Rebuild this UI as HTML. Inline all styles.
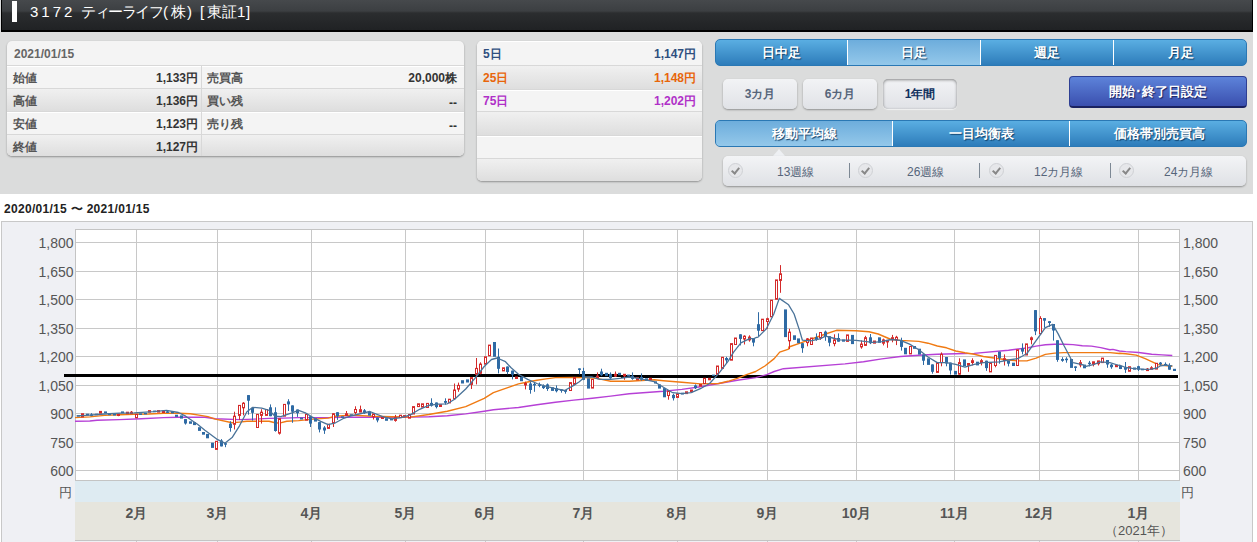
<!DOCTYPE html>
<html><head><meta charset="utf-8">
<style>
*{box-sizing:border-box;margin:0;padding:0}
html,body{width:1257px;height:542px;overflow:hidden;background:#fff;font-family:"Liberation Sans",sans-serif;}
.a{position:absolute}
#topbg{left:0;top:0;width:1253px;height:194px;background:#dbdcdc}
#hdr{left:1px;top:0;width:1252px;height:32px;background:linear-gradient(#46494c 0,#3c3f42 11px,#2b2d2f 13px,#202224 30px);border-bottom:2px solid #000;border-left:1px solid #000;border-right:1px solid #000}
#bar{left:12px;top:1px;width:5px;height:21px;background:#fff}
.ttl{top:3px;color:#fff;font-size:15px;line-height:17px;white-space:nowrap}
.panel{background:#f4f4f4;border-radius:5px;box-shadow:0 1px 2px rgba(0,0,0,.35);overflow:hidden}
.row{position:absolute;left:0;right:0;border-top:1px solid #d8d8d8}
.row.g{background:linear-gradient(#f0f0f0,#dedede)}
.row.l{background:#f4f4f4;box-shadow:inset 0 1px 0 #fff}
.lab{position:absolute;font-size:12px;color:#555;font-weight:bold;white-space:nowrap}
.val{position:absolute;font-size:12px;color:#333;font-weight:bold;white-space:nowrap;text-align:right}
.tabs{border-radius:5px;overflow:hidden;background:linear-gradient(#5aaee2,#2d7cba);border:1px solid #2a78b4}
.tab{position:absolute;top:0;bottom:0;color:#fff;font-weight:bold;font-size:13px;text-align:center;text-shadow:1px 1px 1px #10406a;border-left:1px solid #fff}
.tab.sel{background:linear-gradient(#6daddc,#94c8ea)}
.btn{border-radius:5px;background:linear-gradient(#f2f3f5,#e0e2e6);box-shadow:0 1px 2px rgba(0,0,0,.35);font-size:12px;font-weight:bold;color:#56657a;text-align:center;line-height:30px}
.btn.sel{box-shadow:inset 0 1px 3px rgba(0,0,0,.45),0 1px 1px rgba(255,255,255,.6);color:#10305e}
#setbtn{left:1069px;top:76px;width:178px;height:32px;border-radius:4px;background:linear-gradient(#5d83da,#3a4fae);border:1px solid #2e3f93;border-bottom:2px solid #1a2260;color:#fff;font-size:13px;font-weight:bold;text-align:center;line-height:29px;text-shadow:1px 1px 1px #1a2260}
#sub{left:723px;top:156px;width:523px;height:30px;border-radius:5px;background:linear-gradient(#f3f4f6,#dfe1e5);box-shadow:0 1px 2px rgba(0,0,0,.35)}
.chk{position:absolute;top:7px;width:15px;height:15px;border-radius:50%;background:#e6e7ea;border:1px solid #cfd1d5}
.chk:after{content:"";position:absolute;left:4px;top:2px;width:3px;height:6px;border-right:2px solid #888;border-bottom:2px solid #888;transform:rotate(40deg)}
.sdiv{position:absolute;top:7px;width:1px;height:15px;background:#7d8894}
.stxt{position:absolute;top:8px;font-size:12px;color:#56657a;white-space:nowrap}
#daterange{left:4px;top:201px;font-size:12px;letter-spacing:0.3px;font-weight:bold;color:#222;white-space:nowrap}
#chartbox{left:1px;top:221px;width:1252px;height:330px;background:#eff0f4;border:1px solid #c8c8c8}
</style></head><body>
<div id="topbg" class="a"></div>
<div id="hdr" class="a"></div>
<div id="bar" class="a"></div>
<div class="a ttl" style="left:30px;letter-spacing:3px">3172</div>
<div class="a ttl" style="left:81px;letter-spacing:-1.4px">ティーライフ</div>
<div class="a ttl" style="left:163px">(</div>
<div class="a ttl" style="left:171px">株</div>
<div class="a ttl" style="left:187px">)</div>
<div class="a ttl" style="left:200px">[</div>
<div class="a ttl" style="left:207px;letter-spacing:0px">東証</div>
<div class="a ttl" style="left:237px">1</div>
<div class="a ttl" style="left:246px">]</div>

<div class="a panel" style="left:7px;top:41px;width:457px;height:115px">
  <div class="lab" style="left:7px;top:6px;color:#666">2021/01/15</div>
  <div class="row l" style="top:24px;height:23px"></div>
  <div class="row g" style="top:47px;height:23px"></div>
  <div class="row l" style="top:70px;height:23px"></div>
  <div class="row g" style="top:93px;height:22px"></div>
  <div class="a" style="left:194px;top:24px;width:1px;height:91px;background:#fff;border-left:1px solid #d8d8d8"></div>
  <div class="lab" style="left:6px;top:29px">始値</div>
  <div class="lab" style="left:6px;top:52px">高値</div>
  <div class="lab" style="left:6px;top:75px">安値</div>
  <div class="lab" style="left:6px;top:98px">終値</div>
  <div class="val" style="right:266px;top:29px">1,133円</div>
  <div class="val" style="right:266px;top:52px">1,136円</div>
  <div class="val" style="right:266px;top:75px">1,123円</div>
  <div class="val" style="right:266px;top:98px">1,127円</div>
  <div class="lab" style="left:200px;top:29px">売買高</div>
  <div class="lab" style="left:200px;top:52px">買い残</div>
  <div class="lab" style="left:200px;top:75px">売り残</div>
  <div class="val" style="right:7px;top:29px">20,000株</div>
  <div class="val" style="right:7px;top:55px">--</div>
  <div class="val" style="right:7px;top:78px">--</div>
</div>

<div class="a panel" style="left:477px;top:41px;width:225px;height:140px">
  <div class="row l" style="top:0;height:24px;border-top:0"></div>
  <div class="row g" style="top:24px;height:24px"></div>
  <div class="row l" style="top:48px;height:22px"></div>
  <div class="row g" style="top:70px;height:24px"></div>
  <div class="row l" style="top:94px;height:23px"></div>
  <div class="row g" style="top:117px;height:23px"></div>
  <div class="lab" style="left:6px;top:5px;color:#2f4f7f">5日</div>
  <div class="lab" style="left:6px;top:29px;color:#e8650a">25日</div>
  <div class="lab" style="left:6px;top:52px;color:#b030c8">75日</div>
  <div class="val" style="right:6px;top:5px;color:#2f4f7f">1,147円</div>
  <div class="val" style="right:6px;top:29px;color:#e8650a">1,148円</div>
  <div class="val" style="right:6px;top:52px;color:#b030c8">1,202円</div>
</div>

<div class="a tabs" style="left:715px;top:39px;width:532px;height:27px">
  <div class="tab" style="left:0;width:131px;border-left:0;line-height:25px">日中足</div>
  <div class="tab sel" style="left:131px;width:133px;line-height:25px">日足</div>
  <div class="tab" style="left:264px;width:133px;line-height:25px">週足</div>
  <div class="tab" style="left:397px;width:135px;line-height:25px">月足</div>
</div>
<div class="a btn" style="left:723px;top:79px;width:74px;height:30px">3カ月</div>
<div class="a btn" style="left:803px;top:79px;width:74px;height:30px">6カ月</div>
<div class="a btn sel" style="left:883px;top:79px;width:74px;height:30px">1年間</div>
<div id="setbtn" class="a">開始･終了日設定</div>

<div class="a tabs" style="left:715px;top:120px;width:532px;height:27px">
  <div class="tab sel" style="left:0;width:176px;border-left:0;line-height:25px">移動平均線</div>
  <div class="tab" style="left:176px;width:177px;line-height:25px">一目均衡表</div>
  <div class="tab" style="left:353px;width:179px;line-height:25px">価格帯別売買高</div>
</div>
<div class="a" style="left:773px;top:149px;width:0;height:0;border-left:6px solid transparent;border-right:6px solid transparent;border-bottom:7px solid #eef0f3"></div>
<div id="sub" class="a">
  <div class="chk" style="left:5px"></div><div class="stxt" style="left:54px">13週線</div>
  <div class="sdiv" style="left:126px"></div>
  <div class="chk" style="left:135px"></div><div class="stxt" style="left:184px">26週線</div>
  <div class="sdiv" style="left:256px"></div>
  <div class="chk" style="left:266px"></div><div class="stxt" style="left:311px">12カ月線</div>
  <div class="sdiv" style="left:387px"></div>
  <div class="chk" style="left:396px"></div><div class="stxt" style="left:441px">24カ月線</div>
</div>

<div id="daterange" class="a">2020/01/15 〜 2021/01/15</div>
<div id="chartbox" class="a"></div>
<svg class="a" style="left:0;top:0" width="1257" height="542">
<rect x="75.5" y="229.5" width="1104" height="251" fill="#fff" stroke="#c4c4c4"/>
<rect x="75" y="481" width="1105" height="21" fill="#deebf2"/>
<rect x="75" y="502" width="1105" height="38" fill="#e6e5dd"/>
<line x1="75" y1="540.5" x2="1180" y2="540.5" stroke="#c4c4c4"/>
<line x1="136.5" y1="230" x2="136.5" y2="480" stroke="#c8c8c8"/>
<line x1="136.5" y1="541" x2="136.5" y2="542" stroke="#c8c8c8"/>
<line x1="217.5" y1="230" x2="217.5" y2="480" stroke="#c8c8c8"/>
<line x1="217.5" y1="541" x2="217.5" y2="542" stroke="#c8c8c8"/>
<line x1="311.5" y1="230" x2="311.5" y2="480" stroke="#c8c8c8"/>
<line x1="311.5" y1="541" x2="311.5" y2="542" stroke="#c8c8c8"/>
<line x1="405.5" y1="230" x2="405.5" y2="480" stroke="#c8c8c8"/>
<line x1="405.5" y1="541" x2="405.5" y2="542" stroke="#c8c8c8"/>
<line x1="485.5" y1="230" x2="485.5" y2="480" stroke="#c8c8c8"/>
<line x1="485.5" y1="541" x2="485.5" y2="542" stroke="#c8c8c8"/>
<line x1="583.5" y1="230" x2="583.5" y2="480" stroke="#c8c8c8"/>
<line x1="583.5" y1="541" x2="583.5" y2="542" stroke="#c8c8c8"/>
<line x1="677.5" y1="230" x2="677.5" y2="480" stroke="#c8c8c8"/>
<line x1="677.5" y1="541" x2="677.5" y2="542" stroke="#c8c8c8"/>
<line x1="767.5" y1="230" x2="767.5" y2="480" stroke="#c8c8c8"/>
<line x1="767.5" y1="541" x2="767.5" y2="542" stroke="#c8c8c8"/>
<line x1="856.5" y1="230" x2="856.5" y2="480" stroke="#c8c8c8"/>
<line x1="856.5" y1="541" x2="856.5" y2="542" stroke="#c8c8c8"/>
<line x1="954.5" y1="230" x2="954.5" y2="480" stroke="#c8c8c8"/>
<line x1="954.5" y1="541" x2="954.5" y2="542" stroke="#c8c8c8"/>
<line x1="1039.5" y1="230" x2="1039.5" y2="480" stroke="#c8c8c8"/>
<line x1="1039.5" y1="541" x2="1039.5" y2="542" stroke="#c8c8c8"/>
<line x1="1138.5" y1="230" x2="1138.5" y2="480" stroke="#c8c8c8"/>
<line x1="1138.5" y1="541" x2="1138.5" y2="542" stroke="#c8c8c8"/>
<line x1="76" y1="242.5" x2="1179" y2="242.5" stroke="#c8c8c8"/>
<text x="73.5" y="248.0" text-anchor="end" font-size="14" fill="#555" font-family="Liberation Sans">1,800</text>
<text x="1183" y="248.0" font-size="14" fill="#555" font-family="Liberation Sans">1,800</text>
<line x1="76" y1="271.5" x2="1179" y2="271.5" stroke="#c8c8c8"/>
<text x="73.5" y="277.0" text-anchor="end" font-size="14" fill="#555" font-family="Liberation Sans">1,650</text>
<text x="1183" y="277.0" font-size="14" fill="#555" font-family="Liberation Sans">1,650</text>
<line x1="76" y1="299.5" x2="1179" y2="299.5" stroke="#c8c8c8"/>
<text x="73.5" y="305.0" text-anchor="end" font-size="14" fill="#555" font-family="Liberation Sans">1,500</text>
<text x="1183" y="305.0" font-size="14" fill="#555" font-family="Liberation Sans">1,500</text>
<line x1="76" y1="328.5" x2="1179" y2="328.5" stroke="#c8c8c8"/>
<text x="73.5" y="334.0" text-anchor="end" font-size="14" fill="#555" font-family="Liberation Sans">1,350</text>
<text x="1183" y="334.0" font-size="14" fill="#555" font-family="Liberation Sans">1,350</text>
<line x1="76" y1="356.5" x2="1179" y2="356.5" stroke="#c8c8c8"/>
<text x="73.5" y="362.0" text-anchor="end" font-size="14" fill="#555" font-family="Liberation Sans">1,200</text>
<text x="1183" y="362.0" font-size="14" fill="#555" font-family="Liberation Sans">1,200</text>
<line x1="76" y1="385.5" x2="1179" y2="385.5" stroke="#c8c8c8"/>
<text x="73.5" y="391.0" text-anchor="end" font-size="14" fill="#555" font-family="Liberation Sans">1,050</text>
<text x="1183" y="391.0" font-size="14" fill="#555" font-family="Liberation Sans">1,050</text>
<line x1="76" y1="413.5" x2="1179" y2="413.5" stroke="#c8c8c8"/>
<text x="73.5" y="419.0" text-anchor="end" font-size="14" fill="#555" font-family="Liberation Sans">900</text>
<text x="1183" y="419.0" font-size="14" fill="#555" font-family="Liberation Sans">900</text>
<line x1="76" y1="442.5" x2="1179" y2="442.5" stroke="#c8c8c8"/>
<text x="73.5" y="448.0" text-anchor="end" font-size="14" fill="#555" font-family="Liberation Sans">750</text>
<text x="1183" y="448.0" font-size="14" fill="#555" font-family="Liberation Sans">750</text>
<line x1="76" y1="470.5" x2="1179" y2="470.5" stroke="#c8c8c8"/>
<text x="73.5" y="476.0" text-anchor="end" font-size="14" fill="#555" font-family="Liberation Sans">600</text>
<text x="1183" y="476.0" font-size="14" fill="#555" font-family="Liberation Sans">600</text>
<text x="72" y="497" text-anchor="end" font-size="13" fill="#555" font-family="Liberation Sans">円</text>
<text x="1181" y="497" font-size="13" fill="#555" font-family="Liberation Sans">円</text>
<text x="136.5" y="518" text-anchor="middle" font-size="14" font-weight="bold" fill="#555" font-family="Liberation Sans">2月</text>
<text x="217.5" y="518" text-anchor="middle" font-size="14" font-weight="bold" fill="#555" font-family="Liberation Sans">3月</text>
<text x="311.5" y="518" text-anchor="middle" font-size="14" font-weight="bold" fill="#555" font-family="Liberation Sans">4月</text>
<text x="405.5" y="518" text-anchor="middle" font-size="14" font-weight="bold" fill="#555" font-family="Liberation Sans">5月</text>
<text x="485.5" y="518" text-anchor="middle" font-size="14" font-weight="bold" fill="#555" font-family="Liberation Sans">6月</text>
<text x="583.5" y="518" text-anchor="middle" font-size="14" font-weight="bold" fill="#555" font-family="Liberation Sans">7月</text>
<text x="677.5" y="518" text-anchor="middle" font-size="14" font-weight="bold" fill="#555" font-family="Liberation Sans">8月</text>
<text x="767.5" y="518" text-anchor="middle" font-size="14" font-weight="bold" fill="#555" font-family="Liberation Sans">9月</text>
<text x="856.5" y="518" text-anchor="middle" font-size="14" font-weight="bold" fill="#555" font-family="Liberation Sans">10月</text>
<text x="954.5" y="518" text-anchor="middle" font-size="14" font-weight="bold" fill="#555" font-family="Liberation Sans">11月</text>
<text x="1039.5" y="518" text-anchor="middle" font-size="14" font-weight="bold" fill="#555" font-family="Liberation Sans">12月</text>
<text x="1138.5" y="518" text-anchor="middle" font-size="14" font-weight="bold" fill="#555" font-family="Liberation Sans">1月</text>
<text x="1139" y="535" text-anchor="middle" font-size="13" fill="#555" font-family="Liberation Sans">（2021年）</text>
<rect x="64" y="374" width="557" height="3" fill="#000"/>
<rect x="621" y="375" width="557" height="3" fill="#000"/>
<polyline points="75.0,421.3 89.8,421.0 97.1,420.2 119.3,419.6 141.4,418.7 163.6,417.6 178.4,417.2 204.9,417.2 215.3,418.7 239.5,419.6 254.3,419.1 269.1,418.4 283.8,418.1 298.6,417.6 328.1,417.6 342.9,417.2 391.9,417.3 428.8,416.7 447.3,415.8 465.7,413.9 484.2,411.2 493.4,409.7 518.5,407.5 536.9,404.7 555.4,402.3 573.8,400.1 592.3,398.3 610.7,396.1 629.2,393.7 663.5,391.3 681.9,389.4 700.4,386.8 718.8,383.5 737.3,380.2 755.7,377.6 766.8,374.6 774.2,371.5 783.4,368.7 845.0,363.9 863.5,361.7 881.9,358.9 900.4,356.5 918.8,355.2 937.3,354.3 955.7,353.7 974.2,353.4 1008.5,350.2 1026.9,348.0 1036.1,346.1 1045.4,344.8 1054.6,344.3 1063.8,344.3 1073.0,344.6 1082.3,345.8 1091.5,346.1 1100.7,347.6 1109.9,349.8 1112.9,349.4 1119.4,351.0 1125.8,351.6 1138.7,352.5 1151.7,354.2 1162.0,354.9 1172.3,355.5" fill="none" stroke="#b640d6" stroke-width="1.4" stroke-linejoin="round"/>
<polyline points="75.0,417.6 89.8,416.9 104.5,415.4 119.3,414.7 134.1,414.3 148.8,414.0 163.6,413.2 178.4,413.2 190.2,413.7 200.5,415.4 207.9,416.6 215.3,419.1 232.1,422.8 239.5,422.1 246.9,421.3 269.1,421.3 275.0,422.8 279.4,423.1 286.8,421.3 298.6,420.6 313.4,419.1 328.1,418.1 335.5,416.2 350.3,415.1 373.5,416.3 391.9,416.7 410.4,417.1 428.8,414.5 447.3,411.2 465.7,406.6 484.2,398.3 493.4,392.7 509.2,387.2 518.5,383.9 527.7,382.0 536.9,380.2 546.1,378.9 555.4,377.6 573.8,377.4 584.9,377.6 595.9,378.3 601.5,379.4 610.7,381.3 629.2,381.3 654.2,379.8 663.5,380.7 681.9,382.2 700.4,383.9 718.8,383.5 728.0,381.3 737.3,378.3 746.5,374.6 755.7,371.5 764.9,366.0 774.2,358.6 779.7,352.1 788.6,349.1 788.9,347.0 801.5,342.6 814.4,338.0 825.5,334.0 836.5,330.3 856.1,330.7 869.0,331.8 878.2,334.0 891.1,339.5 900.4,340.4 918.8,341.4 928.0,343.2 937.3,346.0 946.5,347.8 955.7,351.0 964.9,352.8 974.2,354.3 983.4,356.5 999.2,358.7 1008.5,360.0 1017.7,360.9 1026.9,360.9 1036.1,358.1 1045.4,354.4 1054.6,353.1 1063.8,352.6 1109.9,352.6 1119.2,353.5 1119.4,353.3 1125.8,353.8 1136.2,355.1 1145.2,358.7 1151.7,361.6 1158.1,364.6 1164.6,365.5 1172.3,366.2" fill="none" stroke="#f07a12" stroke-width="1.4" stroke-linejoin="round"/>
<rect x="77.0" y="415.1" width="3" height="1.5" fill="#2e6aa4"/>
<rect x="81.5" y="413.7" width="2" height="3.2" fill="#fff" stroke="#d42a2a"/>
<rect x="86.0" y="413.7" width="3" height="1.8" fill="#2e6aa4"/>
<line x1="91.5" y1="413.2" x2="91.5" y2="416.2" stroke="#2e6aa4"/>
<rect x="90.0" y="414.4" width="3" height="1.5" fill="#2e6aa4"/>
<rect x="95.0" y="413.7" width="3" height="1.5" fill="#2e6aa4"/>
<rect x="99.5" y="411.4" width="2" height="1.8" fill="#fff" stroke="#d42a2a"/>
<rect x="104.0" y="411.4" width="3" height="1.8" fill="#2e6aa4"/>
<rect x="108.0" y="413.7" width="3" height="1.5" fill="#2e6aa4"/>
<rect x="113.0" y="414.0" width="3" height="1.5" fill="#2e6aa4"/>
<line x1="118.5" y1="414.0" x2="118.5" y2="416.2" stroke="#d42a2a"/>
<rect x="117.5" y="414.0" width="2" height="1.5" fill="#fff" stroke="#d42a2a"/>
<rect x="121.0" y="411.4" width="3" height="1.8" fill="#2e6aa4"/>
<rect x="126.5" y="412.2" width="2" height="1.5" fill="#fff" stroke="#d42a2a"/>
<line x1="131.5" y1="411.0" x2="131.5" y2="412.9" stroke="#d42a2a"/>
<rect x="130.5" y="412.2" width="2" height="1.5" fill="#fff" stroke="#d42a2a"/>
<rect x="135.5" y="414.3" width="2" height="3.4" fill="#fff" stroke="#d42a2a"/>
<rect x="139.0" y="413.4" width="3" height="1.5" fill="#2e6aa4"/>
<rect x="144.0" y="412.9" width="3" height="1.5" fill="#2e6aa4"/>
<rect x="148.5" y="410.6" width="2" height="1.6" fill="#fff" stroke="#d42a2a"/>
<rect x="153.0" y="410.6" width="3" height="1.6" fill="#2e6aa4"/>
<rect x="157.5" y="410.6" width="2" height="1.5" fill="#fff" stroke="#d42a2a"/>
<rect x="162.5" y="411.0" width="2" height="1.5" fill="#fff" stroke="#d42a2a"/>
<line x1="167.5" y1="410.3" x2="167.5" y2="412.8" stroke="#2e6aa4"/>
<rect x="166.0" y="411.4" width="3" height="1.5" fill="#2e6aa4"/>
<rect x="171.0" y="411.9" width="3" height="1.5" fill="#2e6aa4"/>
<rect x="175.0" y="414.7" width="3" height="2.2" fill="#2e6aa4"/>
<rect x="180.0" y="415.4" width="3" height="3.2" fill="#2e6aa4"/>
<line x1="185.5" y1="419.1" x2="185.5" y2="424.6" stroke="#2e6aa4"/>
<rect x="184.0" y="419.1" width="3" height="4.4" fill="#2e6aa4"/>
<rect x="189.0" y="421.3" width="3" height="2.5" fill="#2e6aa4"/>
<rect x="193.0" y="422.1" width="3" height="3.0" fill="#2e6aa4"/>
<rect x="198.0" y="427.2" width="3" height="3.7" fill="#2e6aa4"/>
<rect x="202.0" y="432.0" width="3" height="2.7" fill="#2e6aa4"/>
<rect x="206.0" y="433.9" width="3" height="4.4" fill="#2e6aa4"/>
<rect x="211.0" y="442.7" width="3" height="5.2" fill="#2e6aa4"/>
<rect x="215.5" y="441.3" width="2" height="8.1" fill="#fff" stroke="#d42a2a"/>
<line x1="221.5" y1="439.1" x2="221.5" y2="446.4" stroke="#2e6aa4"/>
<rect x="220.0" y="440.5" width="3" height="5.9" fill="#2e6aa4"/>
<line x1="225.5" y1="442.7" x2="225.5" y2="447.2" stroke="#2e6aa4"/>
<rect x="224.0" y="443.2" width="3" height="1.5" fill="#2e6aa4"/>
<line x1="230.5" y1="421.3" x2="230.5" y2="431.7" stroke="#2e6aa4"/>
<rect x="229.0" y="423.6" width="3" height="4.4" fill="#2e6aa4"/>
<line x1="234.5" y1="411.7" x2="234.5" y2="429.5" stroke="#d42a2a"/>
<rect x="233.5" y="416.2" width="2" height="8.1" fill="#fff" stroke="#d42a2a"/>
<line x1="239.5" y1="405.4" x2="239.5" y2="419.9" stroke="#d42a2a"/>
<rect x="238.5" y="405.4" width="2" height="10.0" fill="#fff" stroke="#d42a2a"/>
<line x1="243.5" y1="402.1" x2="243.5" y2="415.4" stroke="#d42a2a"/>
<rect x="242.5" y="403.2" width="2" height="4.6" fill="#fff" stroke="#d42a2a"/>
<line x1="248.5" y1="395.1" x2="248.5" y2="414.7" stroke="#2e6aa4"/>
<rect x="247.0" y="395.1" width="3" height="5.6" fill="#2e6aa4"/>
<line x1="252.5" y1="407.8" x2="252.5" y2="420.6" stroke="#2e6aa4"/>
<rect x="251.0" y="407.8" width="3" height="5.0" fill="#2e6aa4"/>
<rect x="256.5" y="414.4" width="2" height="13.1" fill="#fff" stroke="#d42a2a"/>
<line x1="261.5" y1="409.2" x2="261.5" y2="423.6" stroke="#d42a2a"/>
<rect x="260.5" y="412.2" width="2" height="3.2" fill="#fff" stroke="#d42a2a"/>
<rect x="265.5" y="409.5" width="2" height="5.9" fill="#fff" stroke="#d42a2a"/>
<line x1="270.5" y1="404.4" x2="270.5" y2="416.2" stroke="#2e6aa4"/>
<rect x="269.0" y="407.3" width="3" height="8.9" fill="#2e6aa4"/>
<line x1="275.5" y1="407.3" x2="275.5" y2="431.7" stroke="#2e6aa4"/>
<rect x="274.0" y="412.2" width="3" height="18.8" fill="#2e6aa4"/>
<line x1="279.5" y1="418.7" x2="279.5" y2="434.6" stroke="#d42a2a"/>
<rect x="278.5" y="418.7" width="2" height="14.5" fill="#fff" stroke="#d42a2a"/>
<rect x="283.5" y="404.4" width="2" height="11.8" fill="#fff" stroke="#d42a2a"/>
<line x1="288.5" y1="399.2" x2="288.5" y2="411.0" stroke="#2e6aa4"/>
<rect x="287.0" y="401.4" width="3" height="3.0" fill="#2e6aa4"/>
<line x1="292.5" y1="405.4" x2="292.5" y2="422.8" stroke="#2e6aa4"/>
<rect x="291.0" y="405.4" width="3" height="6.3" fill="#2e6aa4"/>
<line x1="297.5" y1="409.5" x2="297.5" y2="416.9" stroke="#2e6aa4"/>
<rect x="296.0" y="409.5" width="3" height="3.7" fill="#2e6aa4"/>
<rect x="300.0" y="417.6" width="3" height="1.9" fill="#2e6aa4"/>
<rect x="305.5" y="414.3" width="2" height="5.9" fill="#fff" stroke="#d42a2a"/>
<line x1="310.5" y1="416.2" x2="310.5" y2="427.0" stroke="#2e6aa4"/>
<rect x="309.0" y="416.2" width="3" height="7.4" fill="#2e6aa4"/>
<rect x="314.0" y="418.1" width="3" height="3.5" fill="#2e6aa4"/>
<line x1="319.5" y1="422.1" x2="319.5" y2="432.4" stroke="#2e6aa4"/>
<rect x="318.0" y="422.1" width="3" height="7.4" fill="#2e6aa4"/>
<line x1="324.5" y1="426.1" x2="324.5" y2="433.9" stroke="#2e6aa4"/>
<rect x="323.0" y="427.5" width="3" height="3.0" fill="#2e6aa4"/>
<rect x="327.5" y="424.3" width="2" height="4.1" fill="#fff" stroke="#d42a2a"/>
<line x1="333.5" y1="413.2" x2="333.5" y2="427.0" stroke="#d42a2a"/>
<rect x="332.5" y="413.7" width="2" height="9.2" fill="#fff" stroke="#d42a2a"/>
<line x1="337.5" y1="412.2" x2="337.5" y2="419.9" stroke="#2e6aa4"/>
<rect x="336.0" y="412.2" width="3" height="4.0" fill="#2e6aa4"/>
<rect x="341.0" y="416.3" width="3" height="1.5" fill="#2e6aa4"/>
<line x1="346.5" y1="411.0" x2="346.5" y2="415.4" stroke="#d42a2a"/>
<rect x="345.5" y="413.7" width="2" height="1.8" fill="#fff" stroke="#d42a2a"/>
<rect x="350.0" y="414.3" width="3" height="1.5" fill="#2e6aa4"/>
<line x1="355.5" y1="406.3" x2="355.5" y2="414.7" stroke="#d42a2a"/>
<rect x="354.5" y="409.5" width="2" height="3.0" fill="#fff" stroke="#d42a2a"/>
<line x1="360.5" y1="405.6" x2="360.5" y2="412.1" stroke="#d42a2a"/>
<rect x="359.5" y="409.7" width="2" height="2.4" fill="#fff" stroke="#d42a2a"/>
<line x1="364.5" y1="409.0" x2="364.5" y2="413.9" stroke="#2e6aa4"/>
<rect x="363.0" y="410.3" width="3" height="2.8" fill="#2e6aa4"/>
<rect x="368.0" y="411.5" width="3" height="4.2" fill="#2e6aa4"/>
<line x1="373.5" y1="413.9" x2="373.5" y2="419.5" stroke="#d42a2a"/>
<rect x="372.5" y="413.9" width="2" height="2.8" fill="#fff" stroke="#d42a2a"/>
<line x1="377.5" y1="417.6" x2="377.5" y2="422.3" stroke="#2e6aa4"/>
<rect x="376.0" y="417.6" width="3" height="2.8" fill="#2e6aa4"/>
<rect x="381.5" y="416.7" width="2" height="1.8" fill="#fff" stroke="#d42a2a"/>
<rect x="385.0" y="418.2" width="3" height="2.6" fill="#2e6aa4"/>
<rect x="390.0" y="418.6" width="3" height="1.8" fill="#2e6aa4"/>
<line x1="395.5" y1="414.9" x2="395.5" y2="421.7" stroke="#d42a2a"/>
<rect x="394.5" y="417.6" width="2" height="2.8" fill="#fff" stroke="#d42a2a"/>
<rect x="399.5" y="415.2" width="2" height="2.4" fill="#fff" stroke="#d42a2a"/>
<rect x="403.5" y="415.6" width="2" height="1.5" fill="#fff" stroke="#d42a2a"/>
<rect x="408.5" y="414.5" width="2" height="3.7" fill="#fff" stroke="#d42a2a"/>
<rect x="412.5" y="406.6" width="2" height="7.4" fill="#fff" stroke="#d42a2a"/>
<rect x="417.5" y="403.8" width="2" height="2.8" fill="#fff" stroke="#d42a2a"/>
<rect x="421.5" y="403.8" width="2" height="3.3" fill="#fff" stroke="#d42a2a"/>
<rect x="426.5" y="403.4" width="2" height="4.1" fill="#fff" stroke="#d42a2a"/>
<line x1="431.5" y1="398.3" x2="431.5" y2="406.6" stroke="#2e6aa4"/>
<rect x="430.0" y="402.9" width="3" height="2.8" fill="#2e6aa4"/>
<line x1="436.5" y1="402.5" x2="436.5" y2="408.4" stroke="#2e6aa4"/>
<rect x="435.0" y="402.5" width="3" height="4.6" fill="#2e6aa4"/>
<rect x="439.5" y="404.7" width="2" height="1.8" fill="#fff" stroke="#d42a2a"/>
<line x1="445.5" y1="398.3" x2="445.5" y2="404.7" stroke="#2e6aa4"/>
<rect x="444.0" y="401.0" width="3" height="1.8" fill="#2e6aa4"/>
<rect x="448.5" y="399.2" width="2" height="3.7" fill="#fff" stroke="#d42a2a"/>
<line x1="454.5" y1="383.5" x2="454.5" y2="399.2" stroke="#d42a2a"/>
<rect x="453.5" y="390.0" width="2" height="8.7" fill="#fff" stroke="#d42a2a"/>
<line x1="458.5" y1="382.6" x2="458.5" y2="391.8" stroke="#d42a2a"/>
<rect x="457.5" y="385.4" width="2" height="3.7" fill="#fff" stroke="#d42a2a"/>
<rect x="461.0" y="380.2" width="3" height="3.3" fill="#2e6aa4"/>
<rect x="466.0" y="379.4" width="3" height="3.1" fill="#2e6aa4"/>
<line x1="471.5" y1="377.6" x2="471.5" y2="389.0" stroke="#d42a2a"/>
<rect x="470.5" y="377.6" width="2" height="6.8" fill="#fff" stroke="#d42a2a"/>
<line x1="476.5" y1="358.0" x2="476.5" y2="384.4" stroke="#d42a2a"/>
<rect x="475.5" y="368.4" width="2" height="5.9" fill="#fff" stroke="#d42a2a"/>
<line x1="480.5" y1="362.3" x2="480.5" y2="374.3" stroke="#d42a2a"/>
<rect x="479.5" y="364.1" width="2" height="9.2" fill="#fff" stroke="#d42a2a"/>
<rect x="484.5" y="356.8" width="2" height="7.4" fill="#fff" stroke="#d42a2a"/>
<rect x="488.5" y="345.1" width="2" height="10.7" fill="#fff" stroke="#d42a2a"/>
<rect x="493.0" y="342.0" width="3" height="14.8" fill="#2e6aa4"/>
<line x1="498.5" y1="348.5" x2="498.5" y2="373.4" stroke="#2e6aa4"/>
<rect x="497.0" y="356.8" width="3" height="12.0" fill="#2e6aa4"/>
<rect x="502.5" y="367.8" width="2" height="3.1" fill="#fff" stroke="#d42a2a"/>
<line x1="507.5" y1="366.5" x2="507.5" y2="374.3" stroke="#2e6aa4"/>
<rect x="506.0" y="366.5" width="3" height="5.5" fill="#2e6aa4"/>
<line x1="512.5" y1="370.6" x2="512.5" y2="379.4" stroke="#2e6aa4"/>
<rect x="511.0" y="370.6" width="3" height="4.1" fill="#2e6aa4"/>
<rect x="515.5" y="377.0" width="2" height="1.5" fill="#fff" stroke="#d42a2a"/>
<rect x="520.0" y="377.0" width="3" height="4.2" fill="#2e6aa4"/>
<line x1="525.5" y1="381.7" x2="525.5" y2="389.4" stroke="#d42a2a"/>
<rect x="524.5" y="383.5" width="2" height="1.5" fill="#fff" stroke="#d42a2a"/>
<line x1="530.5" y1="381.7" x2="530.5" y2="393.7" stroke="#2e6aa4"/>
<rect x="529.0" y="383.5" width="3" height="6.5" fill="#2e6aa4"/>
<line x1="534.5" y1="382.6" x2="534.5" y2="391.8" stroke="#2e6aa4"/>
<rect x="533.0" y="383.9" width="3" height="1.5" fill="#2e6aa4"/>
<line x1="539.5" y1="382.6" x2="539.5" y2="387.2" stroke="#2e6aa4"/>
<rect x="538.0" y="384.4" width="3" height="1.5" fill="#2e6aa4"/>
<line x1="543.5" y1="384.4" x2="543.5" y2="389.0" stroke="#2e6aa4"/>
<rect x="542.0" y="385.7" width="3" height="2.4" fill="#2e6aa4"/>
<line x1="547.5" y1="383.5" x2="547.5" y2="390.9" stroke="#2e6aa4"/>
<rect x="546.0" y="384.4" width="3" height="4.6" fill="#2e6aa4"/>
<rect x="551.0" y="387.2" width="3" height="3.7" fill="#2e6aa4"/>
<line x1="556.5" y1="385.4" x2="556.5" y2="392.4" stroke="#2e6aa4"/>
<rect x="555.0" y="388.1" width="3" height="3.1" fill="#2e6aa4"/>
<line x1="561.5" y1="389.4" x2="561.5" y2="392.7" stroke="#2e6aa4"/>
<rect x="560.0" y="389.4" width="3" height="1.5" fill="#2e6aa4"/>
<line x1="565.5" y1="390.0" x2="565.5" y2="393.7" stroke="#2e6aa4"/>
<rect x="564.0" y="390.0" width="3" height="1.8" fill="#2e6aa4"/>
<rect x="569.5" y="382.6" width="2" height="7.9" fill="#fff" stroke="#d42a2a"/>
<rect x="573.5" y="377.6" width="2" height="6.8" fill="#fff" stroke="#d42a2a"/>
<line x1="579.5" y1="368.4" x2="579.5" y2="374.3" stroke="#2e6aa4"/>
<rect x="578.0" y="368.4" width="3" height="1.5" fill="#2e6aa4"/>
<line x1="583.5" y1="367.8" x2="583.5" y2="380.2" stroke="#2e6aa4"/>
<rect x="582.0" y="371.0" width="3" height="8.9" fill="#2e6aa4"/>
<rect x="587.0" y="378.3" width="3" height="10.3" fill="#2e6aa4"/>
<rect x="591.5" y="379.4" width="2" height="8.7" fill="#fff" stroke="#d42a2a"/>
<line x1="597.5" y1="372.4" x2="597.5" y2="378.9" stroke="#d42a2a"/>
<rect x="596.5" y="376.1" width="2" height="2.2" fill="#fff" stroke="#d42a2a"/>
<line x1="601.5" y1="368.7" x2="601.5" y2="376.1" stroke="#2e6aa4"/>
<rect x="600.0" y="371.5" width="3" height="3.7" fill="#2e6aa4"/>
<rect x="605.0" y="372.8" width="3" height="3.3" fill="#2e6aa4"/>
<line x1="610.5" y1="372.4" x2="610.5" y2="378.9" stroke="#2e6aa4"/>
<rect x="609.0" y="373.9" width="3" height="4.4" fill="#2e6aa4"/>
<line x1="615.5" y1="371.5" x2="615.5" y2="377.0" stroke="#d42a2a"/>
<rect x="614.5" y="374.3" width="2" height="1.8" fill="#fff" stroke="#d42a2a"/>
<rect x="618.0" y="372.8" width="3" height="2.4" fill="#2e6aa4"/>
<line x1="624.5" y1="374.3" x2="624.5" y2="379.8" stroke="#d42a2a"/>
<rect x="623.5" y="374.3" width="2" height="1.5" fill="#fff" stroke="#d42a2a"/>
<rect x="627.0" y="374.6" width="3" height="1.5" fill="#2e6aa4"/>
<line x1="632.5" y1="372.4" x2="632.5" y2="379.8" stroke="#2e6aa4"/>
<rect x="631.0" y="375.8" width="3" height="3.1" fill="#2e6aa4"/>
<rect x="636.5" y="377.6" width="2" height="2.2" fill="#fff" stroke="#d42a2a"/>
<line x1="641.5" y1="373.4" x2="641.5" y2="380.7" stroke="#2e6aa4"/>
<rect x="640.0" y="377.0" width="3" height="2.8" fill="#2e6aa4"/>
<rect x="645.0" y="378.3" width="3" height="2.4" fill="#2e6aa4"/>
<rect x="649.5" y="378.3" width="2" height="1.5" fill="#fff" stroke="#d42a2a"/>
<rect x="654.0" y="381.3" width="3" height="2.2" fill="#2e6aa4"/>
<rect x="658.0" y="384.4" width="3" height="4.2" fill="#2e6aa4"/>
<rect x="663.0" y="388.1" width="3" height="9.2" fill="#2e6aa4"/>
<line x1="668.5" y1="390.9" x2="668.5" y2="399.7" stroke="#d42a2a"/>
<rect x="667.5" y="390.9" width="2" height="4.6" fill="#fff" stroke="#d42a2a"/>
<line x1="673.5" y1="393.7" x2="673.5" y2="400.5" stroke="#2e6aa4"/>
<rect x="672.0" y="394.9" width="3" height="3.3" fill="#2e6aa4"/>
<rect x="676.5" y="393.7" width="2" height="3.7" fill="#fff" stroke="#d42a2a"/>
<rect x="681.0" y="392.7" width="3" height="1.8" fill="#2e6aa4"/>
<rect x="685.5" y="391.8" width="2" height="1.8" fill="#fff" stroke="#d42a2a"/>
<rect x="690.5" y="390.0" width="2" height="1.8" fill="#fff" stroke="#d42a2a"/>
<line x1="695.5" y1="384.4" x2="695.5" y2="389.0" stroke="#2e6aa4"/>
<rect x="694.0" y="385.4" width="3" height="2.8" fill="#2e6aa4"/>
<rect x="699.5" y="384.4" width="2" height="1.8" fill="#fff" stroke="#d42a2a"/>
<rect x="703.5" y="378.3" width="2" height="5.2" fill="#fff" stroke="#d42a2a"/>
<rect x="708.5" y="378.3" width="2" height="1.5" fill="#fff" stroke="#d42a2a"/>
<rect x="712.0" y="374.6" width="3" height="1.5" fill="#2e6aa4"/>
<rect x="716.5" y="366.0" width="2" height="8.3" fill="#fff" stroke="#d42a2a"/>
<rect x="721.5" y="357.3" width="2" height="11.1" fill="#fff" stroke="#d42a2a"/>
<line x1="726.5" y1="356.8" x2="726.5" y2="363.2" stroke="#2e6aa4"/>
<rect x="725.0" y="358.0" width="3" height="2.4" fill="#2e6aa4"/>
<rect x="730.5" y="343.6" width="2" height="16.6" fill="#fff" stroke="#d42a2a"/>
<rect x="734.5" y="338.0" width="2" height="6.5" fill="#fff" stroke="#d42a2a"/>
<line x1="740.5" y1="334.3" x2="740.5" y2="345.4" stroke="#2e6aa4"/>
<rect x="739.0" y="334.3" width="3" height="4.6" fill="#2e6aa4"/>
<line x1="744.5" y1="335.3" x2="744.5" y2="344.5" stroke="#d42a2a"/>
<rect x="743.5" y="336.2" width="2" height="2.8" fill="#fff" stroke="#d42a2a"/>
<line x1="749.5" y1="335.3" x2="749.5" y2="341.7" stroke="#d42a2a"/>
<rect x="748.5" y="337.1" width="2" height="2.8" fill="#fff" stroke="#d42a2a"/>
<line x1="753.5" y1="338.0" x2="753.5" y2="346.3" stroke="#2e6aa4"/>
<rect x="752.0" y="338.0" width="3" height="4.6" fill="#2e6aa4"/>
<line x1="758.5" y1="312.2" x2="758.5" y2="336.2" stroke="#2e6aa4"/>
<rect x="757.0" y="324.2" width="3" height="6.5" fill="#2e6aa4"/>
<rect x="761.5" y="319.2" width="2" height="11.4" fill="#fff" stroke="#d42a2a"/>
<line x1="767.5" y1="317.7" x2="767.5" y2="328.8" stroke="#d42a2a"/>
<rect x="766.5" y="318.7" width="2" height="2.8" fill="#fff" stroke="#d42a2a"/>
<rect x="770.5" y="300.2" width="2" height="16.6" fill="#fff" stroke="#d42a2a"/>
<rect x="775.5" y="279.9" width="2" height="19.4" fill="#fff" stroke="#d42a2a"/>
<line x1="780.5" y1="265.1" x2="780.5" y2="292.8" stroke="#d42a2a"/>
<rect x="779.5" y="273.8" width="2" height="6.6" fill="#fff" stroke="#d42a2a"/>
<rect x="784.0" y="309.4" width="3" height="27.7" fill="#2e6aa4"/>
<line x1="789.5" y1="328.8" x2="789.5" y2="349.1" stroke="#d42a2a"/>
<rect x="788.5" y="332.1" width="2" height="8.7" fill="#fff" stroke="#d42a2a"/>
<rect x="793.0" y="335.3" width="3" height="4.6" fill="#2e6aa4"/>
<rect x="797.0" y="338.4" width="3" height="4.8" fill="#2e6aa4"/>
<line x1="802.5" y1="343.2" x2="802.5" y2="352.8" stroke="#2e6aa4"/>
<rect x="801.0" y="343.2" width="3" height="5.0" fill="#2e6aa4"/>
<line x1="807.5" y1="338.0" x2="807.5" y2="346.3" stroke="#d42a2a"/>
<rect x="806.5" y="338.9" width="2" height="3.7" fill="#fff" stroke="#d42a2a"/>
<rect x="810.5" y="338.0" width="2" height="6.5" fill="#fff" stroke="#d42a2a"/>
<line x1="816.5" y1="333.4" x2="816.5" y2="340.8" stroke="#2e6aa4"/>
<rect x="815.0" y="337.1" width="3" height="2.8" fill="#2e6aa4"/>
<line x1="820.5" y1="332.5" x2="820.5" y2="339.9" stroke="#d42a2a"/>
<rect x="819.5" y="332.5" width="2" height="5.5" fill="#fff" stroke="#d42a2a"/>
<line x1="825.5" y1="330.6" x2="825.5" y2="340.8" stroke="#2e6aa4"/>
<rect x="824.0" y="331.6" width="3" height="4.6" fill="#2e6aa4"/>
<line x1="829.5" y1="336.2" x2="829.5" y2="346.3" stroke="#2e6aa4"/>
<rect x="828.0" y="336.2" width="3" height="6.5" fill="#2e6aa4"/>
<line x1="834.5" y1="334.3" x2="834.5" y2="346.3" stroke="#d42a2a"/>
<rect x="833.5" y="339.9" width="2" height="3.7" fill="#fff" stroke="#d42a2a"/>
<line x1="838.5" y1="333.4" x2="838.5" y2="341.7" stroke="#2e6aa4"/>
<rect x="837.0" y="338.0" width="3" height="3.7" fill="#2e6aa4"/>
<rect x="842.0" y="339.5" width="3" height="2.2" fill="#2e6aa4"/>
<rect x="846.5" y="334.9" width="2" height="6.5" fill="#fff" stroke="#d42a2a"/>
<rect x="851.0" y="334.9" width="3" height="9.2" fill="#2e6aa4"/>
<line x1="861.5" y1="340.4" x2="861.5" y2="348.7" stroke="#d42a2a"/>
<rect x="860.5" y="344.1" width="2" height="2.8" fill="#fff" stroke="#d42a2a"/>
<line x1="865.5" y1="335.8" x2="865.5" y2="346.0" stroke="#d42a2a"/>
<rect x="864.5" y="337.7" width="2" height="7.7" fill="#fff" stroke="#d42a2a"/>
<line x1="870.5" y1="334.0" x2="870.5" y2="344.1" stroke="#2e6aa4"/>
<rect x="869.0" y="337.3" width="3" height="5.9" fill="#2e6aa4"/>
<rect x="873.5" y="341.0" width="2" height="2.2" fill="#fff" stroke="#d42a2a"/>
<rect x="878.0" y="337.3" width="3" height="5.5" fill="#2e6aa4"/>
<line x1="883.5" y1="338.6" x2="883.5" y2="345.4" stroke="#d42a2a"/>
<rect x="882.5" y="339.9" width="2" height="3.3" fill="#fff" stroke="#d42a2a"/>
<line x1="887.5" y1="340.4" x2="887.5" y2="347.8" stroke="#d42a2a"/>
<rect x="886.5" y="340.4" width="2" height="1.5" fill="#fff" stroke="#d42a2a"/>
<line x1="892.5" y1="334.9" x2="892.5" y2="342.3" stroke="#d42a2a"/>
<rect x="891.5" y="337.7" width="2" height="1.5" fill="#fff" stroke="#d42a2a"/>
<line x1="896.5" y1="335.8" x2="896.5" y2="345.1" stroke="#d42a2a"/>
<rect x="895.5" y="337.3" width="2" height="2.6" fill="#fff" stroke="#d42a2a"/>
<line x1="901.5" y1="337.7" x2="901.5" y2="350.6" stroke="#2e6aa4"/>
<rect x="900.0" y="340.4" width="3" height="6.5" fill="#2e6aa4"/>
<rect x="904.0" y="347.8" width="3" height="6.5" fill="#2e6aa4"/>
<rect x="909.5" y="346.5" width="2" height="7.4" fill="#fff" stroke="#d42a2a"/>
<rect x="913.0" y="346.0" width="3" height="2.8" fill="#2e6aa4"/>
<rect x="918.0" y="348.7" width="3" height="5.9" fill="#2e6aa4"/>
<line x1="923.5" y1="354.6" x2="923.5" y2="365.0" stroke="#2e6aa4"/>
<rect x="922.0" y="354.6" width="3" height="6.1" fill="#2e6aa4"/>
<rect x="927.0" y="358.3" width="3" height="6.6" fill="#2e6aa4"/>
<line x1="932.5" y1="364.4" x2="932.5" y2="373.7" stroke="#2e6aa4"/>
<rect x="931.0" y="364.4" width="3" height="7.4" fill="#2e6aa4"/>
<rect x="936.5" y="362.6" width="2" height="9.8" fill="#fff" stroke="#d42a2a"/>
<line x1="941.5" y1="352.4" x2="941.5" y2="366.3" stroke="#d42a2a"/>
<rect x="940.5" y="354.3" width="2" height="8.3" fill="#fff" stroke="#d42a2a"/>
<line x1="946.5" y1="357.0" x2="946.5" y2="366.3" stroke="#2e6aa4"/>
<rect x="945.0" y="357.0" width="3" height="6.5" fill="#2e6aa4"/>
<line x1="950.5" y1="362.6" x2="950.5" y2="374.6" stroke="#2e6aa4"/>
<rect x="949.0" y="362.6" width="3" height="7.9" fill="#2e6aa4"/>
<rect x="954.0" y="370.9" width="3" height="3.7" fill="#2e6aa4"/>
<line x1="959.5" y1="358.3" x2="959.5" y2="374.6" stroke="#d42a2a"/>
<rect x="958.5" y="362.6" width="2" height="11.6" fill="#fff" stroke="#d42a2a"/>
<rect x="963.0" y="359.4" width="3" height="6.8" fill="#2e6aa4"/>
<line x1="968.5" y1="363.5" x2="968.5" y2="371.8" stroke="#d42a2a"/>
<rect x="967.5" y="363.5" width="2" height="1.8" fill="#fff" stroke="#d42a2a"/>
<line x1="972.5" y1="358.3" x2="972.5" y2="365.4" stroke="#d42a2a"/>
<rect x="971.5" y="360.7" width="2" height="1.8" fill="#fff" stroke="#d42a2a"/>
<rect x="976.0" y="361.7" width="3" height="3.7" fill="#2e6aa4"/>
<line x1="981.5" y1="358.9" x2="981.5" y2="365.4" stroke="#d42a2a"/>
<rect x="980.5" y="360.7" width="2" height="1.8" fill="#fff" stroke="#d42a2a"/>
<line x1="986.5" y1="360.7" x2="986.5" y2="370.9" stroke="#2e6aa4"/>
<rect x="985.0" y="360.7" width="3" height="7.4" fill="#2e6aa4"/>
<rect x="989.5" y="362.7" width="2" height="9.2" fill="#fff" stroke="#d42a2a"/>
<line x1="995.5" y1="355.4" x2="995.5" y2="367.3" stroke="#d42a2a"/>
<rect x="994.5" y="355.4" width="2" height="10.1" fill="#fff" stroke="#d42a2a"/>
<line x1="999.5" y1="351.7" x2="999.5" y2="363.7" stroke="#2e6aa4"/>
<rect x="998.0" y="351.7" width="3" height="6.5" fill="#2e6aa4"/>
<line x1="1004.5" y1="354.4" x2="1004.5" y2="365.5" stroke="#d42a2a"/>
<rect x="1003.5" y="358.7" width="2" height="1.8" fill="#fff" stroke="#d42a2a"/>
<line x1="1008.5" y1="360.9" x2="1008.5" y2="366.4" stroke="#2e6aa4"/>
<rect x="1007.0" y="360.9" width="3" height="2.8" fill="#2e6aa4"/>
<rect x="1012.0" y="362.7" width="3" height="3.3" fill="#2e6aa4"/>
<rect x="1016.5" y="349.8" width="2" height="15.7" fill="#fff" stroke="#d42a2a"/>
<line x1="1022.5" y1="343.4" x2="1022.5" y2="354.4" stroke="#2e6aa4"/>
<rect x="1021.0" y="348.3" width="3" height="3.3" fill="#2e6aa4"/>
<rect x="1025.5" y="343.9" width="2" height="11.1" fill="#fff" stroke="#d42a2a"/>
<line x1="1031.5" y1="336.5" x2="1031.5" y2="344.3" stroke="#d42a2a"/>
<rect x="1030.5" y="337.8" width="2" height="1.8" fill="#fff" stroke="#d42a2a"/>
<line x1="1035.5" y1="310.1" x2="1035.5" y2="335.1" stroke="#2e6aa4"/>
<rect x="1034.0" y="310.1" width="3" height="21.2" fill="#2e6aa4"/>
<line x1="1040.5" y1="316.2" x2="1040.5" y2="333.6" stroke="#d42a2a"/>
<rect x="1039.5" y="318.5" width="2" height="15.1" fill="#fff" stroke="#d42a2a"/>
<line x1="1044.5" y1="318.1" x2="1044.5" y2="327.7" stroke="#2e6aa4"/>
<rect x="1043.0" y="318.1" width="3" height="2.6" fill="#2e6aa4"/>
<line x1="1049.5" y1="321.2" x2="1049.5" y2="326.8" stroke="#2e6aa4"/>
<rect x="1048.0" y="321.2" width="3" height="1.8" fill="#2e6aa4"/>
<line x1="1053.5" y1="324.0" x2="1053.5" y2="340.6" stroke="#2e6aa4"/>
<rect x="1052.0" y="324.0" width="3" height="6.5" fill="#2e6aa4"/>
<line x1="1057.5" y1="340.2" x2="1057.5" y2="361.8" stroke="#2e6aa4"/>
<rect x="1056.0" y="340.2" width="3" height="19.7" fill="#2e6aa4"/>
<line x1="1062.5" y1="357.2" x2="1062.5" y2="361.8" stroke="#2e6aa4"/>
<rect x="1061.0" y="359.0" width="3" height="1.8" fill="#2e6aa4"/>
<line x1="1066.5" y1="357.2" x2="1066.5" y2="362.7" stroke="#2e6aa4"/>
<rect x="1065.0" y="358.7" width="3" height="1.5" fill="#2e6aa4"/>
<rect x="1070.0" y="359.0" width="3" height="8.9" fill="#2e6aa4"/>
<line x1="1075.5" y1="366.4" x2="1075.5" y2="371.0" stroke="#2e6aa4"/>
<rect x="1074.0" y="366.4" width="3" height="1.5" fill="#2e6aa4"/>
<line x1="1080.5" y1="360.0" x2="1080.5" y2="367.3" stroke="#d42a2a"/>
<rect x="1079.5" y="362.7" width="2" height="2.2" fill="#fff" stroke="#d42a2a"/>
<rect x="1083.0" y="364.6" width="3" height="3.7" fill="#2e6aa4"/>
<line x1="1089.5" y1="360.9" x2="1089.5" y2="366.4" stroke="#2e6aa4"/>
<rect x="1088.0" y="362.7" width="3" height="1.5" fill="#2e6aa4"/>
<line x1="1093.5" y1="361.8" x2="1093.5" y2="366.4" stroke="#d42a2a"/>
<rect x="1092.5" y="361.8" width="2" height="2.4" fill="#fff" stroke="#d42a2a"/>
<line x1="1098.5" y1="360.9" x2="1098.5" y2="365.5" stroke="#d42a2a"/>
<rect x="1097.5" y="360.9" width="2" height="2.8" fill="#fff" stroke="#d42a2a"/>
<rect x="1101.5" y="358.1" width="2" height="4.5" fill="#fff" stroke="#d42a2a"/>
<line x1="1107.5" y1="360.0" x2="1107.5" y2="367.8" stroke="#2e6aa4"/>
<rect x="1106.0" y="360.0" width="3" height="4.5" fill="#2e6aa4"/>
<line x1="1111.5" y1="363.9" x2="1111.5" y2="368.8" stroke="#2e6aa4"/>
<rect x="1110.0" y="364.6" width="3" height="2.6" fill="#2e6aa4"/>
<rect x="1115.5" y="365.2" width="2" height="1.5" fill="#fff" stroke="#d42a2a"/>
<line x1="1120.5" y1="365.2" x2="1120.5" y2="369.1" stroke="#2e6aa4"/>
<rect x="1119.0" y="365.8" width="3" height="3.2" fill="#2e6aa4"/>
<line x1="1125.5" y1="362.0" x2="1125.5" y2="372.9" stroke="#2e6aa4"/>
<rect x="1124.0" y="367.1" width="3" height="2.6" fill="#2e6aa4"/>
<rect x="1128.5" y="366.7" width="2" height="4.6" fill="#fff" stroke="#d42a2a"/>
<rect x="1133.0" y="367.5" width="3" height="2.2" fill="#2e6aa4"/>
<line x1="1138.5" y1="365.8" x2="1138.5" y2="371.0" stroke="#2e6aa4"/>
<rect x="1137.0" y="366.2" width="3" height="3.5" fill="#2e6aa4"/>
<rect x="1141.0" y="368.8" width="3" height="1.5" fill="#2e6aa4"/>
<line x1="1147.5" y1="368.0" x2="1147.5" y2="370.4" stroke="#d42a2a"/>
<rect x="1146.5" y="369.1" width="2" height="1.5" fill="#fff" stroke="#d42a2a"/>
<line x1="1151.5" y1="366.2" x2="1151.5" y2="369.3" stroke="#d42a2a"/>
<rect x="1150.5" y="367.8" width="2" height="1.5" fill="#fff" stroke="#d42a2a"/>
<rect x="1155.5" y="363.3" width="2" height="5.8" fill="#fff" stroke="#d42a2a"/>
<line x1="1160.5" y1="362.0" x2="1160.5" y2="365.5" stroke="#2e6aa4"/>
<rect x="1159.0" y="362.6" width="3" height="1.9" fill="#2e6aa4"/>
<line x1="1165.5" y1="362.4" x2="1165.5" y2="365.5" stroke="#2e6aa4"/>
<rect x="1164.0" y="363.9" width="3" height="1.5" fill="#2e6aa4"/>
<line x1="1169.5" y1="363.3" x2="1169.5" y2="369.7" stroke="#2e6aa4"/>
<rect x="1168.0" y="365.8" width="3" height="3.9" fill="#2e6aa4"/>
<rect x="1173.0" y="368.8" width="3" height="2.2" fill="#2e6aa4"/>
<polyline points="76.5,415.9 89.8,415.1 104.5,414.0 119.3,413.2 134.1,412.8 153.3,411.7 166.5,410.3 178.4,412.5 185.7,416.2 197.5,424.3 204.9,430.2 216.7,439.1 224.8,443.2 232.1,437.6 239.5,425.8 246.9,411.7 252.8,407.3 261.7,408.1 269.1,410.3 275.0,416.2 280.9,416.6 291.2,413.2 298.6,410.3 306.0,413.2 311.9,416.9 320.7,421.3 328.1,424.6 335.5,422.8 342.9,418.7 350.3,416.2 369.8,411.5 382.7,416.7 391.9,418.9 401.1,417.6 410.4,414.9 419.6,409.3 428.8,405.3 438.0,404.2 447.3,403.8 454.6,399.2 465.7,389.0 474.9,378.3 484.2,366.5 491.5,359.5 497.1,358.0 505.5,361.7 511.1,367.8 518.5,374.3 527.7,379.4 536.9,383.5 546.1,386.3 555.4,388.7 564.6,390.5 573.8,385.4 579.3,381.7 584.9,377.0 592.3,377.0 599.6,379.4 610.7,379.4 619.9,378.3 629.2,377.0 638.4,378.3 654.2,381.7 663.5,387.2 672.7,392.7 681.9,393.7 691.1,392.7 700.4,388.7 709.6,383.5 718.8,373.4 728.0,361.4 733.6,352.1 740.9,342.9 750.2,338.3 753.5,338.9 755.7,337.7 758.1,337.1 766.4,328.8 773.8,314.0 779.3,298.4 788.6,304.8 794.1,314.0 799.6,330.6 802.4,340.2 810.7,340.8 819.9,338.9 825.5,336.2 832.8,338.0 840.2,339.9 856.1,340.4 872.7,342.3 881.9,341.7 891.1,339.5 900.4,340.4 909.6,344.1 918.8,349.7 928.0,357.0 937.3,362.6 946.5,362.6 955.7,364.4 964.9,367.2 974.2,364.4 983.4,362.6 999.2,361.8 1008.5,360.0 1017.7,358.7 1026.9,353.5 1036.1,340.6 1045.4,327.7 1052.7,324.4 1058.3,334.1 1063.8,345.2 1073.0,362.7 1082.3,364.6 1085.9,366.4 1093.3,364.6 1100.7,361.8 1109.9,362.7 1119.2,365.5 1119.4,365.2 1125.8,367.5 1132.3,368.4 1138.7,368.8 1145.2,369.3 1151.7,369.1 1156.8,368.0 1160.7,365.8 1167.1,365.2 1172.3,365.8" fill="none" stroke="#4a7399" stroke-width="1.3" stroke-linejoin="round"/>
</svg>
</body></html>
